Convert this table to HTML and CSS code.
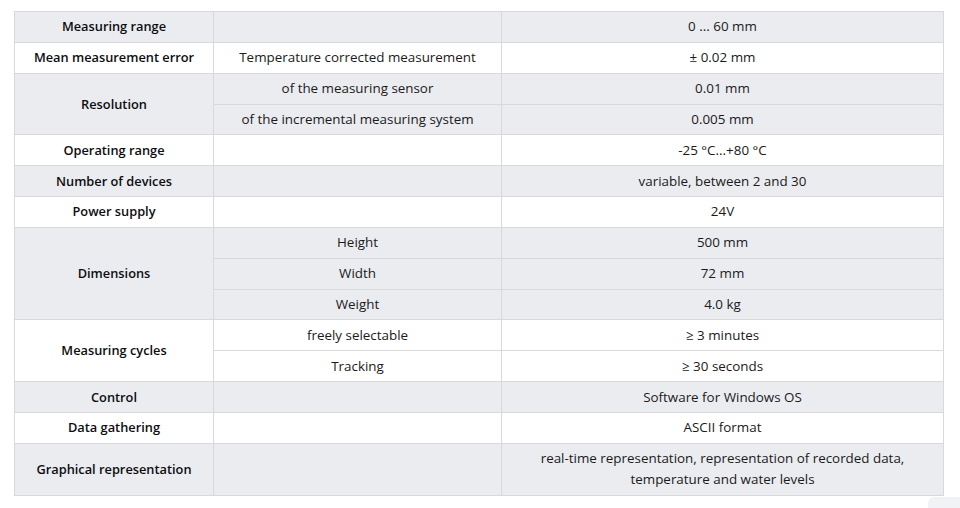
FILE: index.html
```html
<!DOCTYPE html>
<html>
<head>
<meta charset="utf-8">
<link rel="stylesheet" href="styles.css">
</head>
<body>
<div class="page">
<table class="spec">
<colgroup><col class="c1"><col class="c2"><col class="c3"></colgroup>
<tbody>
<tr class="g"><th>Measuring range</th><td></td><td>0 ... 60 mm</td></tr>
<tr><th>Mean measurement error</th><td>Temperature corrected measurement</td><td>± 0.02 mm</td></tr>
<tr class="g"><th rowspan="2">Resolution</th><td>of the measuring sensor</td><td>0.01 mm</td></tr>
<tr class="g"><td>of the incremental measuring system</td><td>0.005 mm</td></tr>
<tr><th>Operating range</th><td></td><td>-25 °C...+80 °C</td></tr>
<tr class="g"><th>Number of devices</th><td></td><td>variable, between 2 and 30</td></tr>
<tr><th>Power supply</th><td></td><td>24V</td></tr>
<tr class="g"><th rowspan="3">Dimensions</th><td>Height</td><td>500 mm</td></tr>
<tr class="g"><td>Width</td><td>72 mm</td></tr>
<tr class="g"><td>Weight</td><td>4.0 kg</td></tr>
<tr><th rowspan="2">Measuring cycles</th><td>freely selectable</td><td>≥ 3 minutes</td></tr>
<tr><td>Tracking</td><td>≥ 30 seconds</td></tr>
<tr class="g"><th>Control</th><td></td><td>Software for Windows OS</td></tr>
<tr><th>Data gathering</th><td></td><td>ASCII format</td></tr>
<tr class="g"><th>Graphical representation</th><td></td><td>real-time representation, representation of recorded data,<br>temperature and water levels</td></tr>
</tbody>
</table>
</div>
<div class="totop"></div>
</body>
</html>
```
FILE: styles.css
```css
html, body {
  margin: 0;
  padding: 0;
  background: #fff;
}
.page {
  padding: 11px 0 0 14px;
}
.spec {
  border-collapse: collapse;
  width: 929px;
  table-layout: fixed;
  font-family: "Open Sans", "Noto Sans", sans-serif;
  font-size: 13.4px;
  color: #1a1a20;
}
.c1 { width: 199px; }
.c2 { width: 288px; }
.c3 { width: 442px; }
.spec th, .spec td {
  border: 1px solid #d9d9dc;
  padding: 4.4px 6px 4.46px;
  line-height: 21px;
  text-align: center;
  vertical-align: middle;
}
.spec th {
  font-weight: 600;
  font-size: 12.8px;
  color: #0d0d10;
}
.spec tr.g th, .spec tr.g td {
  background: #ebecf0;
}
.totop {
  position: absolute;
  left: 928px;
  top: 497px;
  width: 40px;
  height: 20px;
  border-radius: 6px;
  background: #f1f2f5;
}
```
